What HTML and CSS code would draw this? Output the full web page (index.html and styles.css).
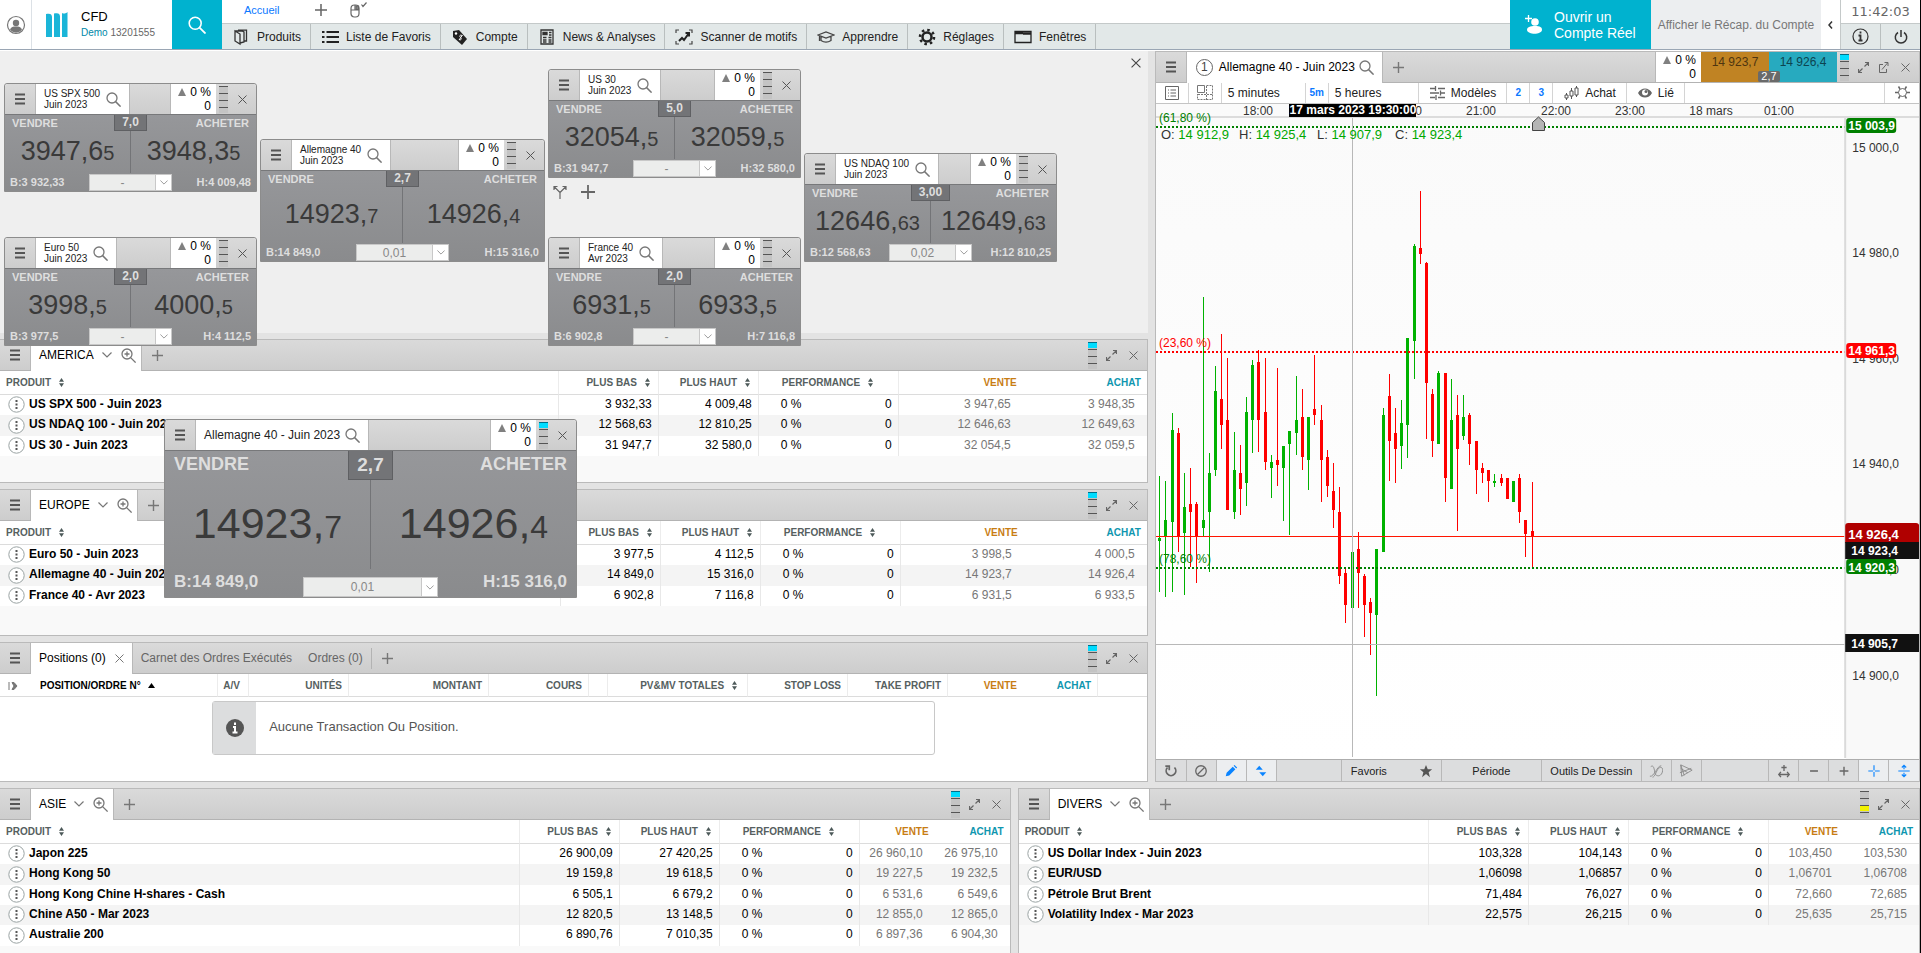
FILE: index.html
```html
<!DOCTYPE html>
<html lang="fr">
<head>
  <meta charset="UTF-8">
  <title>CFD</title>
  <link rel="stylesheet" href="styles.css">
</head>
<body>
  <!-- shared icons -->
  <svg class="sprite" width="0" height="0" aria-hidden="true">
    <symbol id="i-menu" viewBox="0 0 10 12"><path d="M0 1.500h10M0 6h10M0 10.500h10" stroke="#555" stroke-width="2"/></symbol>
    <symbol id="i-search" viewBox="0 0 15 15"><circle cx="6" cy="6" r="5" fill="none" stroke="currentColor" stroke-width="1.300"/><path d="M9.600 9.600l5 5" stroke="currentColor" stroke-width="1.500"/></symbol>
    <symbol id="i-zoom" viewBox="0 0 15 15"><circle cx="6" cy="6" r="5" fill="none" stroke="currentColor" stroke-width="1.300"/><path d="M9.600 9.600l5 5M3.500 6h5M6 3.500v5" stroke="currentColor" stroke-width="1.300"/></symbol>
    <symbol id="i-close" viewBox="0 0 9 9"><path d="M.5.5l8 8M8.500.5l-8 8" stroke="currentColor"/></symbol>
    <symbol id="i-plus" viewBox="0 0 11 11"><path d="M0 5.500h11M5.500 0v11" stroke="currentColor" stroke-width="1.400"/></symbol>
    <symbol id="i-down" viewBox="0 0 10 6"><path d="M.5.5L5 5l4.500-4.500" fill="none" stroke="currentColor" stroke-width="1.200"/></symbol>
    <symbol id="i-up" viewBox="0 0 8 8"><path d="M4 0l4 8H0z" fill="#808080"/></symbol>
    <symbol id="i-expand" viewBox="0 0 11 11"><path d="M6.500 4.500l4-4M7 .5h3.500V4M4.500 6.500l-4 4M.5 7v3.500H4" fill="none" stroke="currentColor" stroke-width="1.200"/></symbol>
    <symbol id="i-more" viewBox="0 0 17 17"><circle cx="8.500" cy="8.500" r="7.700" fill="#fff" stroke="#9aa3a3"/><path d="M7.500 4h2v2h-2zM7.500 7.500h2v2h-2zM7.500 11h2v2h-2z" fill="#555"/></symbol>
    <symbol id="i-sort" viewBox="0 0 5 9"><path d="M2.500 0L5 3.700H0zM2.500 9L5 5.300H0z" fill="#4d5a5a"/></symbol>
  </svg>

  <header class="topbar">
    <button class="user" aria-label="Profil">
      <svg width="20" height="20" viewBox="0 0 20 20"><circle cx="10" cy="10" r="8.500" fill="#fff" stroke="#777" stroke-width="1.200"/><circle cx="10" cy="8" r="3.200" fill="#777"/><path d="M4 14.500c1-2.500 3-3 6-3s5 .5 6 3a7.300 7.300 0 0 1-12 0z" fill="#777"/></svg>
    </button>
    <div class="brand">
      <svg width="22" height="26" viewBox="0 0 22 26" fill="#1bb5d8"><path d="M0 2c4-1 6 0 6 3v20H0zM8 1.500c4-1 6 0 6 3V25H8zM16 1c2 1 4 .5 5.500-1v25H16z"/></svg>
      <div class="brand-text">
        <span class="brand-name">CFD</span>
        <span class="brand-account"><b>Demo</b> 13201555</span>
      </div>
    </div>
    <button class="find" aria-label="Rechercher">
      <svg width="18" height="18"><use href="#i-search"/></svg>
    </button>
    <div class="nav">
      <div class="workspaces">
        <a href="#" class="workspace">Accueil</a>
        <button aria-label="Ajouter"><svg width="12" height="12"><use href="#i-plus"/></svg></button>
        <button aria-label="Souris">
          <svg width="17" height="16" viewBox="0 0 17 16" fill="none" stroke="#666" stroke-width="1.200"><rect x="1" y="3" width="8" height="12" rx="3.500"/><path d="M5 3v5M1 8h8M11.500 2.500l1.500 2L16.500.5"/><path d="M6 4h2.500v3.500H6z" fill="#888"/></svg>
        </button>
      </div>
      <nav class="menu">
        <a href="#"><svg viewBox="0 0 18 18" fill="none" stroke="#333" stroke-width="1.300"><path d="M3 3l5 3v10l-5-3zM3 3h7l2 1v10l-4 1M6 2.200h8.500V13H12"/></svg>Produits</a>
        <a href="#"><svg viewBox="0 0 18 18" stroke="#222" stroke-width="2"><path d="M5.500 4H18M5.500 9H18M5.500 14H18M1 4h2.500M1 9h2.500M1 14h2.500"/></svg>Liste de Favoris</a>
        <a href="#"><svg viewBox="0 0 18 18"><path d="M2 3l6-1 8 9-5 6-9-8z" fill="#222"/><circle cx="5" cy="5.500" r="1.200" fill="#fff"/><path d="M11 7.500c-2-1-3 .5-1.500 2s.5 3-1.500 2M11.500 7L8 12" stroke="#fff" fill="none"/></svg>Compte</a>
        <a href="#"><svg viewBox="0 0 18 18" fill="none" stroke="#333" stroke-width="1.300"><path d="M3 2h12v14H3z"/><path d="M5 4.500h4v2H5z" fill="#333"/><path d="M11 4.500h2.500M11 7h2.500M5 9.500h3.500M10.500 9.500h3M5 12h3.500M10.500 12h3M5 14h3.500M10.500 14h3"/></svg>News &amp; Analyses</a>
        <a href="#"><svg viewBox="0 0 18 18" fill="none" stroke="#444" stroke-width="1.200"><path d="M1 5V2h3M14 2h3v3M1 13v3h3M14 16h3v-3"/><path d="M4 13l3-3 2 2 5-7M10.500 5H14v3.500" stroke="#222" stroke-width="2"/></svg>Scanner de motifs</a>
        <a href="#"><svg viewBox="0 0 18 18" fill="none" stroke="#444" stroke-width="1.300"><path d="M1 7l8-3 8 3-8 3zM4 8.500v4c3 2 7 2 10 0v-4M2.500 8v5"/></svg>Apprendre</a>
        <a href="#"><svg viewBox="0 0 18 18" fill="none" stroke="#222"><circle cx="9" cy="9" r="4.500" stroke-width="2.500"/><circle cx="9" cy="9" r="7" stroke-width="2.600" stroke-dasharray="2.500 3"/></svg>Réglages</a>
        <a href="#"><svg viewBox="0 0 18 18" fill="none" stroke="#222"><path d="M1 3.500h16v11H1z" stroke-width="1.300"/><path d="M1 5h8M9 5.500h8" stroke-width="2.500"/></svg>Fenêtres</a>
      </nav>
    </div>
    <button class="open-account">
      <svg width="18" height="20" viewBox="0 0 18 20" fill="#fff"><circle cx="10" cy="7" r="3.800"/><path d="M2 15c0-3 3-4 8-4s7 1 7 4c-1 5-14 5-15 0z"/><path d="M0 3.500h7M3.500 0v7" stroke="#fff" stroke-width="1.300"/></svg>
      <span>Ouvrir un<br>Compte Réel</span>
    </button>
    <button class="recap">Afficher le Récap. du Compte</button>
    <button class="fold" aria-label="Replier"><svg width="5" height="8" viewBox="0 0 5 8"><path d="M4 .5L1 4l3 3.500" fill="none" stroke="#333" stroke-width="1.500"/></svg></button>
    <div class="status">
      <time class="clock">11:42:03</time>
      <div class="status-buttons">
        <button aria-label="Informations"><svg width="17" height="17" viewBox="0 0 17 17"><circle cx="8.500" cy="8.500" r="7.500" fill="none" stroke="#333" stroke-width="1.200"/><path d="M8.500 3.500v2M6.500 7.500h2v5M6.500 12.500h4" stroke="#333" stroke-width="1.800" fill="none"/></svg></button>
        <button aria-label="Déconnexion"><svg width="16" height="16" viewBox="0 0 16 16" fill="none" stroke="#333" stroke-width="1.500"><path d="M8 1v7M5 3.500a5.700 5.700 0 1 0 6 0"/></svg></button>
      </div>
    </div>
  </header>

  <main class="workspace-grid">
    <div class="upper">
      <div class="left">
        <section class="desktop">
          <button class="desktop-close" aria-label="Fermer"><svg width="10" height="10"><use href="#i-close"/></svg></button>
          <div class="desktop-tools">
            <button aria-label="Diviser"><svg width="14" height="14" viewBox="0 0 14 14" fill="none" stroke="#666" stroke-width="1.200"><path d="M7 14V7.500L1 1.500M7 7.500l6-6M1 5V1.500h3.500M9.500 1.500H13V5"/></svg></button>
            <button aria-label="Ajouter"><svg width="14" height="14"><use href="#i-plus"/></svg></button>
          </div>

          <article class="ticket t-spx">
            <header class="ticket-head">
              <button class="burger" aria-label="Menu"><svg><use href="#i-menu"/></svg></button>
              <div class="ticket-tab"><span>US SPX 500<br>Juin 2023</span><svg class="glass"><use href="#i-search"/></svg></div>
              <div class="perf"><span><svg><use href="#i-up"/></svg> 0 %</span><span>0</span></div>
              <i class="bars"></i>
              <button class="x" aria-label="Fermer"><svg><use href="#i-close"/></svg></button>
            </header>
            <div class="ticket-body">
              <div class="sides"><span>VENDRE</span><b class="spread">7,0</b><span>ACHETER</span></div>
              <div class="prices"><button>3947,6<small>5</small></button><button>3948,3<small>5</small></button></div>
              <div class="limits"><span>B:3 932,33</span><div class="qty"><input type="text" value="-" aria-label="Quantité"><button aria-label="Choisir"><svg><use href="#i-down"/></svg></button></div><span>H:4 009,48</span></div>
            </div>
          </article>

          <article class="ticket t-dax">
            <header class="ticket-head">
              <button class="burger" aria-label="Menu"><svg><use href="#i-menu"/></svg></button>
              <div class="ticket-tab"><span>Allemagne 40<br>Juin 2023</span><svg class="glass"><use href="#i-search"/></svg></div>
              <div class="perf"><span><svg><use href="#i-up"/></svg> 0 %</span><span>0</span></div>
              <i class="bars"></i>
              <button class="x" aria-label="Fermer"><svg><use href="#i-close"/></svg></button>
            </header>
            <div class="ticket-body">
              <div class="sides"><span>VENDRE</span><b class="spread">2,7</b><span>ACHETER</span></div>
              <div class="prices"><button>14923,<small>7</small></button><button>14926,<small>4</small></button></div>
              <div class="limits"><span>B:14 849,0</span><div class="qty"><input type="text" value="0,01" aria-label="Quantité"><button aria-label="Choisir"><svg><use href="#i-down"/></svg></button></div><span>H:15 316,0</span></div>
            </div>
          </article>

          <article class="ticket t-dow">
            <header class="ticket-head">
              <button class="burger" aria-label="Menu"><svg><use href="#i-menu"/></svg></button>
              <div class="ticket-tab"><span>US 30<br>Juin 2023</span><svg class="glass"><use href="#i-search"/></svg></div>
              <div class="perf"><span><svg><use href="#i-up"/></svg> 0 %</span><span>0</span></div>
              <i class="bars"></i>
              <button class="x" aria-label="Fermer"><svg><use href="#i-close"/></svg></button>
            </header>
            <div class="ticket-body">
              <div class="sides"><span>VENDRE</span><b class="spread">5,0</b><span>ACHETER</span></div>
              <div class="prices"><button>32054,<small>5</small></button><button>32059,<small>5</small></button></div>
              <div class="limits"><span>B:31 947,7</span><div class="qty"><input type="text" value="-" aria-label="Quantité"><button aria-label="Choisir"><svg><use href="#i-down"/></svg></button></div><span>H:32 580,0</span></div>
            </div>
          </article>

          <article class="ticket t-ndaq">
            <header class="ticket-head">
              <button class="burger" aria-label="Menu"><svg><use href="#i-menu"/></svg></button>
              <div class="ticket-tab"><span>US NDAQ 100<br>Juin 2023</span><svg class="glass"><use href="#i-search"/></svg></div>
              <div class="perf"><span><svg><use href="#i-up"/></svg> 0 %</span><span>0</span></div>
              <i class="bars"></i>
              <button class="x" aria-label="Fermer"><svg><use href="#i-close"/></svg></button>
            </header>
            <div class="ticket-body">
              <div class="sides"><span>VENDRE</span><b class="spread">3,00</b><span>ACHETER</span></div>
              <div class="prices"><button>12646,<small>63</small></button><button>12649,<small>63</small></button></div>
              <div class="limits"><span>B:12 568,63</span><div class="qty"><input type="text" value="0,02" aria-label="Quantité"><button aria-label="Choisir"><svg><use href="#i-down"/></svg></button></div><span>H:12 810,25</span></div>
            </div>
          </article>

          <article class="ticket t-euro">
            <header class="ticket-head">
              <button class="burger" aria-label="Menu"><svg><use href="#i-menu"/></svg></button>
              <div class="ticket-tab"><span>Euro 50<br>Juin 2023</span><svg class="glass"><use href="#i-search"/></svg></div>
              <div class="perf"><span><svg><use href="#i-up"/></svg> 0 %</span><span>0</span></div>
              <i class="bars"></i>
              <button class="x" aria-label="Fermer"><svg><use href="#i-close"/></svg></button>
            </header>
            <div class="ticket-body">
              <div class="sides"><span>VENDRE</span><b class="spread">2,0</b><span>ACHETER</span></div>
              <div class="prices"><button>3998,<small>5</small></button><button>4000,<small>5</small></button></div>
              <div class="limits"><span>B:3 977,5</span><div class="qty"><input type="text" value="-" aria-label="Quantité"><button aria-label="Choisir"><svg><use href="#i-down"/></svg></button></div><span>H:4 112,5</span></div>
            </div>
          </article>

          <article class="ticket t-cac">
            <header class="ticket-head">
              <button class="burger" aria-label="Menu"><svg><use href="#i-menu"/></svg></button>
              <div class="ticket-tab"><span>France 40<br>Avr 2023</span><svg class="glass"><use href="#i-search"/></svg></div>
              <div class="perf"><span><svg><use href="#i-up"/></svg> 0 %</span><span>0</span></div>
              <i class="bars"></i>
              <button class="x" aria-label="Fermer"><svg><use href="#i-close"/></svg></button>
            </header>
            <div class="ticket-body">
              <div class="sides"><span>VENDRE</span><b class="spread">2,0</b><span>ACHETER</span></div>
              <div class="prices"><button>6931,<small>5</small></button><button>6933,<small>5</small></button></div>
              <div class="limits"><span>B:6 902,8</span><div class="qty"><input type="text" value="-" aria-label="Quantité"><button aria-label="Choisir"><svg><use href="#i-down"/></svg></button></div><span>H:7 116,8</span></div>
            </div>
          </article>

          <article class="ticket big t-float">
            <header class="ticket-head">
              <button class="burger" aria-label="Menu"><svg><use href="#i-menu"/></svg></button>
              <div class="ticket-tab"><span>Allemagne 40 - Juin 2023</span><svg class="glass"><use href="#i-search"/></svg></div>
              <div class="perf"><span><svg><use href="#i-up"/></svg> 0 %</span><span>0</span></div>
              <i class="bars live"></i>
              <button class="x" aria-label="Fermer"><svg><use href="#i-close"/></svg></button>
            </header>
            <div class="ticket-body">
              <div class="sides"><span>VENDRE</span><b class="spread">2,7</b><span>ACHETER</span></div>
              <div class="prices"><button>14923,<small>7</small></button><button>14926,<small>4</small></button></div>
              <div class="limits"><span>B:14 849,0</span><div class="qty"><input type="text" value="0,01" aria-label="Quantité"><button aria-label="Choisir"><svg><use href="#i-down"/></svg></button></div><span>H:15 316,0</span></div>
            </div>
          </article>
        </section>

        <section class="panel">
          <header class="strip">
            <button class="burger" aria-label="Menu"><svg><use href="#i-menu"/></svg></button>
            <div class="tab">AMERICA <svg class="chev"><use href="#i-down"/></svg><svg class="glass"><use href="#i-zoom"/></svg></div>
            <button class="add" aria-label="Ajouter"><svg><use href="#i-plus"/></svg></button>
            <i class="bars live"></i>
            <button class="grow" aria-label="Agrandir"><svg><use href="#i-expand"/></svg></button>
            <button class="x" aria-label="Fermer"><svg><use href="#i-close"/></svg></button>
          </header>
          <table class="quotes wide">
            <colgroup><col><col class="c-num"><col class="c-num"><col class="c-perf"><col class="c-price"><col class="c-price"></colgroup>
            <thead><tr><th>PRODUIT <svg><use href="#i-sort"/></svg></th><th>PLUS BAS <svg><use href="#i-sort"/></svg></th><th>PLUS HAUT <svg><use href="#i-sort"/></svg></th><th>PERFORMANCE <svg><use href="#i-sort"/></svg></th><th class="sell">VENTE</th><th class="buy">ACHAT</th></tr></thead>
            <tbody>
              <tr><td><button aria-label="Options"><svg><use href="#i-more"/></svg></button>US SPX 500 - Juin 2023</td><td>3 932,33</td><td>4 009,48</td><td><span>0 %</span><span>0</span></td><td>3 947,65</td><td>3 948,35</td></tr>
              <tr><td><button aria-label="Options"><svg><use href="#i-more"/></svg></button>US NDAQ 100 - Juin 2023</td><td>12 568,63</td><td>12 810,25</td><td><span>0 %</span><span>0</span></td><td>12 646,63</td><td>12 649,63</td></tr>
              <tr><td><button aria-label="Options"><svg><use href="#i-more"/></svg></button>US 30 - Juin 2023</td><td>31 947,7</td><td>32 580,0</td><td><span>0 %</span><span>0</span></td><td>32 054,5</td><td>32 059,5</td></tr>
            </tbody>
          </table>
        </section>

        <section class="panel">
          <header class="strip">
            <button class="burger" aria-label="Menu"><svg><use href="#i-menu"/></svg></button>
            <div class="tab">EUROPE <svg class="chev"><use href="#i-down"/></svg><svg class="glass"><use href="#i-zoom"/></svg></div>
            <button class="add" aria-label="Ajouter"><svg><use href="#i-plus"/></svg></button>
            <i class="bars live"></i>
            <button class="grow" aria-label="Agrandir"><svg><use href="#i-expand"/></svg></button>
            <button class="x" aria-label="Fermer"><svg><use href="#i-close"/></svg></button>
          </header>
          <table class="quotes europe">
            <colgroup><col><col class="c-num"><col class="c-num"><col class="c-perf"><col class="c-price"><col class="c-price"></colgroup>
            <thead><tr><th>PRODUIT <svg><use href="#i-sort"/></svg></th><th>PLUS BAS <svg><use href="#i-sort"/></svg></th><th>PLUS HAUT <svg><use href="#i-sort"/></svg></th><th>PERFORMANCE <svg><use href="#i-sort"/></svg></th><th class="sell">VENTE</th><th class="buy">ACHAT</th></tr></thead>
            <tbody>
              <tr><td><button aria-label="Options"><svg><use href="#i-more"/></svg></button>Euro 50 - Juin 2023</td><td>3 977,5</td><td>4 112,5</td><td><span>0 %</span><span>0</span></td><td>3 998,5</td><td>4 000,5</td></tr>
              <tr><td><button aria-label="Options"><svg><use href="#i-more"/></svg></button>Allemagne 40 - Juin 2023</td><td>14 849,0</td><td>15 316,0</td><td><span>0 %</span><span>0</span></td><td>14 923,7</td><td>14 926,4</td></tr>
              <tr><td><button aria-label="Options"><svg><use href="#i-more"/></svg></button>France 40 - Avr 2023</td><td>6 902,8</td><td>7 116,8</td><td><span>0 %</span><span>0</span></td><td>6 931,5</td><td>6 933,5</td></tr>
            </tbody>
          </table>
        </section>

        <section class="panel positions">
          <header class="strip">
            <button class="burger" aria-label="Menu"><svg><use href="#i-menu"/></svg></button>
            <div class="tab">Positions (0) <svg class="tab-x"><use href="#i-close"/></svg></div>
            <button class="other">Carnet des Ordres Exécutés</button>
            <button class="other last">Ordres (0)</button>
            <button class="add" aria-label="Ajouter"><svg><use href="#i-plus"/></svg></button>
            <i class="bars live"></i>
            <button class="grow" aria-label="Agrandir"><svg><use href="#i-expand"/></svg></button>
            <button class="x" aria-label="Fermer"><svg><use href="#i-close"/></svg></button>
          </header>
          <table class="orders">
            <colgroup><col class="o-icon"><col class="o-id"><col class="o-side"><col class="c-num"><col class="c-perf"><col class="c-num"><col class="o-gap"><col class="c-perf"><col class="c-num"><col class="c-num"><col class="o-price"><col class="o-price"><col></colgroup>
            <thead><tr>
              <th><svg class="step" viewBox="0 0 10 8"><path d="M1 0v8M4 .5h2L9 4 6 7.500H4L6 4z" fill="#777" stroke="#777"/></svg></th>
              <th class="sorted">POSITION/ORDRE N° <svg class="asc" viewBox="0 0 7 5"><path d="M3.500 0L7 5H0z"/></svg></th>
              <th>A/V</th><th>UNITÉS</th><th>MONTANT</th><th>COURS</th><th></th>
              <th>PV&amp;MV TOTALES <svg><use href="#i-sort"/></svg></th><th>STOP LOSS</th><th>TAKE PROFIT</th>
              <th class="sell">VENTE</th><th class="buy">ACHAT</th><th></th>
            </tr></thead>
          </table>
          <div class="notice">
            <div class="notice-icon"><svg width="18" height="18" viewBox="0 0 18 18"><circle cx="9" cy="9" r="9" fill="#555"/><path d="M9 3.500V6M7 8h2v5.500M6.500 13.500h5" stroke="#fff" stroke-width="2" fill="none"/></svg></div>
            <p>Aucune Transaction Ou Position.</p>
          </div>
        </section>
      </div>

      <section class="panel chart">
        <header class="strip">
          <button class="burger" aria-label="Menu"><svg><use href="#i-menu"/></svg></button>
          <div class="tab"><span class="num">1</span>Allemagne 40 - Juin 2023<svg class="glass"><use href="#i-search"/></svg></div>
          <button class="add" aria-label="Ajouter"><svg><use href="#i-plus"/></svg></button>
          <div class="perf"><span><svg><use href="#i-up"/></svg> 0 %</span><span>0</span></div>
          <div class="deal"><button class="deal-sell">14 923,7</button><button class="deal-buy">14 926,4</button><span class="deal-spread">2,7</span></div>
          <i class="bars live"></i>
          <button class="grow" aria-label="Agrandir"><svg><use href="#i-expand"/></svg></button>
          <button class="grow" aria-label="Détacher"><svg viewBox="0 0 11 11" fill="none" stroke="currentColor"><path d="M5 2.500H1.500v8h7V7M4 7.500L9.500 1M6.500.5H10V4"/></svg></button>
          <button class="x" aria-label="Fermer"><svg><use href="#i-close"/></svg></button>
        </header>
        <div class="tools">
          <button class="t-icon" aria-label="Liste"><svg width="14" height="14" viewBox="0 0 14 14" fill="none" stroke="#666"><path d="M.5.5h13v13H.5zM3 4h1M5.500 4H11M3 7h1M5.500 7H11M3 10h1M5.500 10H11"/></svg></button>
          <button class="t-icon" aria-label="Grille"><svg width="16" height="15" viewBox="0 0 16 15" fill="none" stroke="#777"><path d="M.5.500h7v7h-7z"/><path d="M9.500.5h6v14h-15V9M9.500 1v14M1 9.500h15" stroke-dasharray="2 1"/></svg></button>
          <button class="t-range">5 minutes</button>
          <button class="t-key">5m</button>
          <button class="t-hours">5 heures</button>
          <button class="t-text"><svg width="15" height="14" viewBox="0 0 15 14" stroke="#666" stroke-width="1.300"><path d="M0 2.500h6M8 2.500h7M0 7h9M11 7h4M0 11.500h5M8 11.500h7M5.500 0v5M10.500 4.500v5M6 9v5"/></svg>Modèles</button>
          <button class="t-key">2</button>
          <button class="t-key">3</button>
          <button class="t-text"><svg width="15" height="14" viewBox="0 0 15 14" fill="none" stroke="#555"><path d="M2.500 7v2M2.500 12v2M7.500 2v3M7.500 10v3M12.500 0v2M12.500 9v2M1 9h3v3H1zM6 5h3v5H6zM11 2h3v7h-3z"/></svg>Achat</button>
          <button class="t-text"><svg width="14" height="14" viewBox="0 0 14 14"><path d="M0 7c3-6 11-6 14 0-3 6-11 6-14 0z" fill="#666"/><circle cx="7" cy="6.500" r="3" fill="#fff"/><circle cx="8" cy="5.500" r="1.500" fill="#666"/></svg>Lié</button>
          <button class="t-icon t-gear" aria-label="Réglages"><svg width="15" height="15" viewBox="0 0 15 15" fill="none" stroke="#666"><circle cx="7.500" cy="7.500" r="4"/><path d="M5 4L3.500 1.500M10 4l1.500-2.500M3.500 7.500H0M11.500 7.500H15M5 11l-1.500 2.500M10 11l1.500 2.500" stroke-width="1.500"/></svg></button>
        </div>
        <svg class="plot" width="100%" role="img" aria-label="Allemagne 40">
          <defs>
            <linearGradient id="bg" x1="0" y1="0" x2="0" y2="1"><stop offset="0" stop-color="#fafafa"/><stop offset="1" stop-color="#fff"/></linearGradient>
          </defs>
          <rect width="100%" height="100%" fill="url(#bg)"/>
          <rect y="12" width="100%" height="2" fill="#dcdcdc"/>
          <g text-anchor="middle">
            <text x="102" y="11">18:00</text>
            <text x="251" y="11">20:00</text>
            <text x="325" y="11">21:00</text>
            <text x="400" y="11">22:00</text>
            <text x="474" y="11">23:00</text>
            <text x="555" y="11">18 mars</text>
            <text x="623" y="11">01:00</text>
          </g>
          <rect x="133" y="0" width="127" height="13"/>
          <text x="197" y="10" class="cursor-time">17 mars 2023 19:30:00</text>
          <g id="candles" transform="translate(0 14)"></g>
          <g class="levels">
            <line x2="100%" y1="23" y2="23" stroke="#008000"/>
            <line x2="100%" y1="248" y2="248" stroke="#f00"/>
            <line x2="100%" y1="464" y2="464" stroke="#008000"/>
          </g>
          <line x2="100%" y1="432.500" y2="432.500" stroke="#ff1500"/>
          <line x2="100%" y1="540.500" y2="540.500" stroke="#b8b8b8"/>
          <line x1="196.500" x2="196.500" y1="14" y2="653" stroke="#b8b8b8"/>
          <text x="3" y="18" class="up">(61,80 %)</text>
          <text x="3" y="243" class="down">(23,60 %)</text>
          <text x="3" y="459" class="up">(78,60 %)</text>
          <g class="ohlc">
            <text x="5" y="35">O: <tspan>14 912,9</tspan></text>
            <text x="83" y="35">H: <tspan>14 925,4</tspan></text>
            <text x="161" y="35">L: <tspan>14 907,9</tspan></text>
            <text x="239" y="35">C: <tspan>14 923,4</tspan></text>
          </g>
          <path d="M376.500 26.500v-8l6-5.500 6 5.500v8z" fill="#b5b5b5" stroke="#444"/>
          <!-- price scale, measured from the right edge -->
          <svg x="100%" overflow="visible">
            <rect x="-73" y="14" width="73" height="700" fill="#f9f9f9"/>
            <rect x="-75" y="14" width="2" height="640" fill="#dadada"/>
            <text x="-67" y="48">15 000,0</text>
            <text x="-67" y="153">14 980,0</text>
            <text x="-67" y="259">14 960,0</text>
            <text x="-67" y="364">14 940,0</text>
            <text x="-67" y="470">14 920,0</text>
            <text x="-67" y="576">14 900,0</text>
            <rect x="-73" y="14" width="50" height="15" rx="3" fill="#008000"/>
            <text x="-71" y="26" class="tag">15 003,9</text>
            <rect x="-73" y="239" width="50" height="15" rx="3" fill="#f00"/>
            <text x="-71" y="251" class="tag">14 961,3</text>
            <path d="M-74 439v-17q0-3 3-3h68q3 0 3 3v17z" fill="#b00000"/>
            <text x="-71" y="435" class="tag current">14 926,4</text>
            <rect x="-74" y="438" width="74" height="17" fill="#111"/>
            <text x="-68" y="451" class="tag">14 923,4</text>
            <rect x="-73" y="455" width="50" height="15" rx="3" fill="#008000"/>
            <text x="-71" y="468" class="tag">14 920,3</text>
            <rect x="-74" y="530" width="74" height="18" fill="#111"/>
            <text x="-68" y="544" class="tag">14 905,7</text>
          </svg>
        </svg>
        <footer class="drawbar">
          <button class="d-icon" aria-label="Actualiser"><svg viewBox="0 0 16 16" fill="none" stroke="#666" stroke-width="2"><path d="M4 4a5.500 5.500 0 1 0 8 0M1.500 2.500h4.500V7"/></svg></button>
          <button class="d-icon" aria-label="Effacer"><svg viewBox="0 0 16 16" fill="none" stroke="#666" stroke-width="1.500"><circle cx="8" cy="8" r="6"/><path d="M4 12l8-8"/></svg></button>
          <button class="d-icon on" aria-label="Dessiner"><svg viewBox="0 0 16 16" fill="#0a84ff"><path d="M2 14l1-4 7-7 3 3-7 7zM11 2l1-1 3 3-1 1z"/></svg></button>
          <button class="d-icon on" aria-label="Niveaux"><svg viewBox="0 0 16 16" fill="#0a84ff"><path d="M6 2l4 4.500H2zM10 14l4-4.500H6z"/></svg></button>
          <span class="d-gap"></span>
          <button class="d-fav">Favoris<svg viewBox="0 0 16 16" fill="#555"><path d="M8 1l2 5h5l-4 3.500 1.500 5.500L8 11.500 3.500 15 5 9.500 1 6h5z"/></svg></button>
          <button class="d-period">Période</button>
          <button class="d-draw">Outils De Dessin</button>
          <button class="d-icon" aria-label="Indicateurs"><svg viewBox="0 0 16 16" fill="none" stroke="#888"><path d="M1 14c5 1 8-12 13-12M2 3c4-3 4 5 5 8s6 4 8-1-1-8-4-5-4 10-7 10"/></svg></button>
          <button class="d-icon" aria-label="Motifs"><svg viewBox="0 0 16 16" fill="none" stroke="#888"><path d="M2 1l13 6L3 14zM2 1l4 12M1 10L14 5M2 5l8 5"/></svg></button>
          <span class="d-rest"></span>
          <button class="d-icon" aria-label="Ajuster"><svg viewBox="0 0 16 16" fill="none" stroke="#666" stroke-width="1.500"><path d="M8 1v7M5 4h6M2 12h12M4.500 9L2 12l2.500 3M11.500 9l2.500 3-2.500 3"/></svg></button>
          <button class="d-icon" aria-label="Réduire"><svg viewBox="0 0 16 16" stroke="#666" stroke-width="1.800"><path d="M3.500 8h9"/></svg></button>
          <button class="d-icon" aria-label="Agrandir"><svg viewBox="0 0 16 16" stroke="#666" stroke-width="1.600"><path d="M3 8h10M8 3v10"/></svg></button>
          <button class="d-icon on" aria-label="Réticule"><svg viewBox="0 0 16 16" stroke="#0a84ff" stroke-width="1.300"><path d="M1.500 8H7M9 8h5.500M8 1.500V7M8 9v5.500"/></svg></button>
          <button class="d-icon on" aria-label="Échelle"><svg viewBox="0 0 16 16" fill="none" stroke="#0a84ff" stroke-width="1.300"><path d="M1.500 8h13M8 6V1.500M5.500 4L8 1.500 10.500 4M8 10v4.500M5.500 12L8 14.500l2.500-2.500"/></svg></button>
        </footer>
      </section>
    </div>

    <div class="lower">
      <section class="panel">
        <header class="strip">
          <button class="burger" aria-label="Menu"><svg><use href="#i-menu"/></svg></button>
          <div class="tab">ASIE <svg class="chev"><use href="#i-down"/></svg><svg class="glass"><use href="#i-zoom"/></svg></div>
          <button class="add" aria-label="Ajouter"><svg><use href="#i-plus"/></svg></button>
          <i class="bars live"></i>
          <button class="grow" aria-label="Agrandir"><svg><use href="#i-expand"/></svg></button>
          <button class="x" aria-label="Fermer"><svg><use href="#i-close"/></svg></button>
        </header>
        <table class="quotes">
          <colgroup><col><col class="c-num"><col class="c-num"><col class="c-perf"><col class="c-price"><col class="c-price"></colgroup>
          <thead><tr><th>PRODUIT <svg><use href="#i-sort"/></svg></th><th>PLUS BAS <svg><use href="#i-sort"/></svg></th><th>PLUS HAUT <svg><use href="#i-sort"/></svg></th><th>PERFORMANCE <svg><use href="#i-sort"/></svg></th><th class="sell">VENTE</th><th class="buy">ACHAT</th></tr></thead>
          <tbody>
            <tr><td><button aria-label="Options"><svg><use href="#i-more"/></svg></button>Japon 225</td><td>26 900,09</td><td>27 420,25</td><td><span>0 %</span><span>0</span></td><td>26 960,10</td><td>26 975,10</td></tr>
            <tr><td><button aria-label="Options"><svg><use href="#i-more"/></svg></button>Hong Kong 50</td><td>19 159,8</td><td>19 618,5</td><td><span>0 %</span><span>0</span></td><td>19 227,5</td><td>19 232,5</td></tr>
            <tr><td><button aria-label="Options"><svg><use href="#i-more"/></svg></button>Hong Kong Chine H-shares - Cash</td><td>6 505,1</td><td>6 679,2</td><td><span>0 %</span><span>0</span></td><td>6 531,6</td><td>6 549,6</td></tr>
            <tr><td><button aria-label="Options"><svg><use href="#i-more"/></svg></button>Chine A50 - Mar 2023</td><td>12 820,5</td><td>13 148,5</td><td><span>0 %</span><span>0</span></td><td>12 855,0</td><td>12 865,0</td></tr>
            <tr><td><button aria-label="Options"><svg><use href="#i-more"/></svg></button>Australie 200</td><td>6 890,76</td><td>7 010,35</td><td><span>0 %</span><span>0</span></td><td>6 897,36</td><td>6 904,30</td></tr>
          </tbody>
        </table>
      </section>

      <section class="panel">
        <header class="strip">
          <button class="burger" aria-label="Menu"><svg><use href="#i-menu"/></svg></button>
          <div class="tab">DIVERS <svg class="chev"><use href="#i-down"/></svg><svg class="glass"><use href="#i-zoom"/></svg></div>
          <button class="add" aria-label="Ajouter"><svg><use href="#i-plus"/></svg></button>
          <i class="bars warn"></i>
          <button class="grow" aria-label="Agrandir"><svg><use href="#i-expand"/></svg></button>
          <button class="x" aria-label="Fermer"><svg><use href="#i-close"/></svg></button>
        </header>
        <table class="quotes">
          <colgroup><col><col class="c-num"><col class="c-num"><col class="c-perf"><col class="c-price"><col class="c-price"></colgroup>
          <thead><tr><th>PRODUIT <svg><use href="#i-sort"/></svg></th><th>PLUS BAS <svg><use href="#i-sort"/></svg></th><th>PLUS HAUT <svg><use href="#i-sort"/></svg></th><th>PERFORMANCE <svg><use href="#i-sort"/></svg></th><th class="sell">VENTE</th><th class="buy">ACHAT</th></tr></thead>
          <tbody>
            <tr><td><button aria-label="Options"><svg><use href="#i-more"/></svg></button>US Dollar Index - Juin 2023</td><td>103,328</td><td>104,143</td><td><span>0 %</span><span>0</span></td><td>103,450</td><td>103,530</td></tr>
            <tr><td><button aria-label="Options"><svg><use href="#i-more"/></svg></button>EUR/USD</td><td>1,06098</td><td>1,06857</td><td><span>0 %</span><span>0</span></td><td>1,06701</td><td>1,06708</td></tr>
            <tr><td><button aria-label="Options"><svg><use href="#i-more"/></svg></button>Pétrole Brut Brent</td><td>71,484</td><td>76,027</td><td><span>0 %</span><span>0</span></td><td>72,660</td><td>72,685</td></tr>
            <tr><td><button aria-label="Options"><svg><use href="#i-more"/></svg></button>Volatility Index - Mar 2023</td><td>22,575</td><td>26,215</td><td><span>0 %</span><span>0</span></td><td>25,635</td><td>25,715</td></tr>
          </tbody>
        </table>
      </section>
    </div>
  </main>
  <script src="script.js"></script>
</body>
</html>
```
FILE: styles.css
```css
* {
  box-sizing: border-box;
}
body {
  margin: 0;
  height: 100vh;
  display: flex;
  flex-direction: column;
  overflow: hidden;
  border-right: 1px solid #000;
  background: #fff;
  color: #222;
  font: 12px "Liberation Sans", Arial, sans-serif;
}
button {
  margin: 0;
  padding: 0;
  border: 0;
  background: none;
  color: inherit;
  font: inherit;
}
a {
  color: inherit;
  text-decoration: none;
}
svg {
  flex: none;
  display: block;
}
.sprite {
  position: absolute;
}

/* top bar */
.topbar {
  display: flex;
  flex: none;
  height: 50px;
  margin-bottom: 1px;
  border-bottom: 1px solid #9aa6b4;
}
.user {
  width: 32px;
  padding: 0 6px;
  border-right: 1px solid #dce1e6;
}
.brand {
  display: flex;
  align-items: center;
  gap: 13px;
  width: 140px;
  padding-left: 14px;
}
.brand-text {
  display: flex;
  flex-direction: column;
  gap: 1px;
}
.brand-name {
  color: #000;
  font-size: 13px;
  line-height: 15px;
}
.brand-account {
  color: #666;
  font-size: 10px;
  line-height: 15px;
}
.brand-account b {
  color: #0088a8;
  font-weight: normal;
}
.find {
  display: flex;
  align-items: center;
  justify-content: center;
  width: 50px;
  background: #00b2cf;
  color: #fff;
}
.nav {
  flex: 1;
  display: flex;
  flex-direction: column;
}
.workspaces {
  display: flex;
  align-items: center;
  gap: 23px;
  height: 23px;
  padding: 0 22px 3px;
  color: #666;
}
.workspaces button:first-of-type {
  margin-left: 13px;
}
.workspace {
  color: #0a78ff;
  font-size: 11px;
}
.menu {
  display: flex;
  flex: 1;
  border-top: 1px solid #c4c9c9;
  background: #e2e8e8;
}
.menu a {
  display: flex;
  align-items: center;
  gap: 7px;
  padding: 0 9px 0 10px;
  border-right: 1px solid #b9bfbf;
}
.menu svg {
  width: 18px;
  height: 18px;
}
.open-account {
  display: flex;
  align-items: center;
  gap: 11px;
  width: 141px;
  padding-left: 15px;
  background: #00b2cf;
  color: #fff;
  font-size: 14px;
  line-height: 16px;
  text-align: left;
}
.recap {
  width: 170px;
  background: #eceef0;
  color: #777;
}
.recap,
.tab,
.other,
.menu a {
  white-space: nowrap;
}
.fold {
  display: flex;
  align-items: center;
  justify-content: center;
  width: 19px;
}
.status {
  display: flex;
  flex-direction: column;
  width: 80px;
  border-left: 1px solid #c4c9c9;
}
.clock {
  height: 23px;
  color: #666;
  font: 13px/23px "DejaVu Sans", sans-serif;
  text-align: center;
}
.status-buttons {
  display: flex;
  flex: 1;
  border-top: 1px solid #c4c9c9;
  background: #e2e8e8;
}
.status-buttons button {
  display: flex;
  flex: 1;
  align-items: center;
  justify-content: center;
}
.status-buttons button + button {
  border-left: 1px solid #b9bfbf;
}

/* layout */
.workspace-grid {
  flex: 1;
  display: grid;
  grid-template-rows: minmax(0, 1fr) 165px;
  gap: 6px;
  background: #e3e3e3;
}
.upper {
  display: grid;
  grid-template-columns: 3fr 2fr;
  gap: 7px;
  min-height: 0;
}
.lower {
  display: grid;
  grid-template-columns: 28fr 25fr;
  gap: 7px;
}
.left {
  display: grid;
  grid-template-rows: 282px 144px 1fr 140px;
  row-gap: 6px;
  min-width: 0;
}

/* panels */
.panel {
  display: flex;
  flex-direction: column;
  min-width: 0;
  border: 1px solid #bababa;
  border-left-width: 0;
  background: #f9f9f9;
}
.chart,
.lower .panel + .panel {
  border-left-width: 1px;
}
.lower .panel {
  border-bottom: 0;
}
.strip {
  display: flex;
  flex: none;
  align-items: center;
  height: 31px;
  border-bottom: 1px solid #b3b3b3;
  background: linear-gradient(#dadada, #cdcdcd);
  color: #666;
}
.burger {
  display: flex;
  flex: none;
  align-items: center;
  justify-content: center;
  align-self: stretch;
  width: 31px;
  border-right: 1px solid #b8b8b8;
}
.burger svg {
  width: 10px;
  height: 12px;
}
.tab {
  display: flex;
  align-items: center;
  height: 31px;
  padding: 0 5px 0 8px;
  border-right: 1px solid #b8b8b8;
  background: #fff;
  color: #000;
}
.glass {
  width: 15px;
  height: 15px;
  color: #777;
}
.chev {
  width: 10px;
  height: 6px;
  margin: 0 9px 0 8px;
  color: #777;
}
.tab-x {
  width: 9px;
  height: 9px;
  margin: 0 3px 0 9px;
  color: #777;
}
.other {
  padding: 0 8px;
}
.last {
  height: 21px;
  border-right: 1px solid #b3b3b3;
}
.add {
  margin: 0 auto 0 10px;
  color: #777;
}
.add svg,
.grow svg {
  width: 11px;
  height: 11px;
}
.strip .grow {
  margin-left: 9px;
}
.x svg {
  width: 9px;
  height: 9px;
}
.strip .x {
  margin: 0 9px 0 12px;
}
.bars {
  flex: none;
  width: 9px;
  height: 27px;
  background: repeating-linear-gradient(#555 0 1px, #c4c4c4 1px 7px);
}
.bars.live {
  background: linear-gradient(#00708a 0 1px, #00dcff 1px 6px, transparent 6px), repeating-linear-gradient(#555 0 1px, #c4c4c4 1px 7px);
}
.bars.warn {
  background: linear-gradient(transparent 15px, #f2f200 15px 20px, transparent 20px), repeating-linear-gradient(#555 0 1px, #c4c4c4 1px 7px);
}
.perf {
  display: flex;
  flex: none;
  flex-direction: column;
  align-items: flex-end;
  justify-content: center;
  align-self: stretch;
  width: 46px;
  padding-right: 5px;
  border-left: 1px solid #b8b8b8;
  background: #fff;
  color: #000;
  line-height: 14px;
}
.perf span {
  display: flex;
  align-items: center;
  gap: 4px;
}
.perf svg {
  width: 8px;
  height: 8px;
}

/* tables */
table {
  width: 100%;
  border-collapse: separate;
  border-spacing: 0;
  table-layout: fixed;
}
.c-num {
  width: 100px;
}
.c-perf {
  width: 140px;
}
.c-price {
  width: 75px;
}
.wide .c-price {
  width: 124px;
}
.europe .c-price {
  width: 123px;
}
th {
  height: 24px;
  padding: 0 8px 0 0;
  border-right: 1px solid #ececec;
  border-bottom: 1px solid #dcdcdc;
  background: #fff;
  color: #566060;
  font-size: 10px;
  line-height: 12px;
  text-align: right;
  white-space: nowrap;
}
th svg {
  display: inline-block;
  width: 5px;
  height: 9px;
  margin-left: 5px;
  vertical-align: -1px;
}
.quotes th:first-child {
  padding-left: 6px;
  text-align: left;
}
.quotes th:nth-child(4) {
  padding-left: 23px;
  text-align: left;
}
.quotes .sell,
.quotes .buy,
.orders .sell,
.orders .buy {
  padding-right: 6px;
  border-right: 0;
}
th.sell {
  color: #c87d14;
}
th.buy {
  color: #0f96af;
}
td {
  height: 20px;
  padding: 0 6px 2px 0;
  border-right: 1px solid #e8e8e8;
  background: #fff;
  color: #000;
  line-height: 18px;
  text-align: right;
  white-space: nowrap;
}
tr:nth-child(even) td {
  background: #f4f4f4;
}
td:first-child {
  padding-left: 8px;
  font-weight: bold;
  text-align: left;
}
td button {
  display: inline-block;
  height: 17px;
  margin-right: 4px;
  vertical-align: middle;
}
td button svg {
  width: 17px;
  height: 17px;
}
td:nth-child(4) span:first-child {
  float: left;
  margin-left: 22px;
}
td:nth-child(n + 5) {
  padding-right: 12px;
  border-right: 0;
  color: #777;
}
.positions {
  background: #fff;
}
.orders th {
  height: 23px;
  padding: 1px 6px 0 0;
}
.orders th:nth-child(8) {
  padding-right: 10px;
}
.orders th:first-child {
  border-right: 0;
}
.orders th:first-child svg {
  display: block;
  width: 10px;
  height: 8px;
  margin: 0 0 0 8px;
}
.orders .sorted {
  padding-left: 12px;
  color: #000;
  text-align: left;
}
.orders .asc {
  width: 7px;
  height: 5px;
  vertical-align: 1px;
}
.orders th:nth-child(12) {
  border-right: 1px solid #ececec;
}
.orders th:last-child {
  border-right: 0;
}
.o-icon {
  width: 28px;
}
.o-id {
  width: 190px;
}
.o-side {
  width: 31px;
}
.o-gap {
  width: 19px;
}
.o-price {
  width: 75px;
}
.orders th:nth-child(3) {
  padding-right: 8px;
}
.notice {
  display: flex;
  align-self: center;
  width: 63%;
  height: 54px;
  margin-top: 4px;
  border: 1px solid #c8c8c8;
  border-radius: 3px;
  color: #555;
  font-size: 13px;
}
.notice-icon {
  display: flex;
  align-items: center;
  justify-content: center;
  width: 43px;
  background: #dcddde;
}
.notice p {
  margin: 0 13px;
  line-height: 50px;
}

/* order tickets floating over the desktop */
.desktop {
  position: relative;
  z-index: 2;
  background: #efefef;
}
.desktop-close {
  position: absolute;
  top: 7px;
  right: 7px;
  color: #444;
}
.desktop-tools {
  position: absolute;
  top: 134px;
  left: 553px;
  display: flex;
  gap: 14px;
  color: #666;
}
.ticket {
  position: absolute;
  display: flex;
  flex-direction: column;
  width: 253px;
  height: 109px;
  border: 1px solid #8c8c8c;
  border-radius: 3px 3px 0 0;
}
.t-spx { left: 4px; top: 32px; }
.t-dax { left: 260px; top: 88px; width: 285px; height: 123px; }
.t-dow { left: 548px; top: 18px; }
.t-ndaq { left: 804px; top: 102px; }
.t-euro { left: 4px; top: 186px; }
.t-cac { left: 548px; top: 186px; }
.t-float { left: 164px; top: 368px; width: 413px; height: 179px; }
.ticket-head {
  display: flex;
  flex: none;
  align-items: center;
  height: 31px;
  border-bottom: 1px solid #77787a;
  border-radius: 3px 3px 0 0;
  background: linear-gradient(#dadada, #cdcdcd);
  color: #555;
}
.ticket-tab {
  display: flex;
  align-items: center;
  align-self: stretch;
  gap: 6px;
  margin-right: auto;
  padding: 0 8px;
  border-right: 1px solid #b8b8b8;
  background: #fff;
  color: #222;
  font-size: 10px;
  line-height: 11px;
}
.big .ticket-tab {
  gap: 5px;
  font-size: 12px;
}
.ticket .bars {
  margin: 0 10px 0 3px;
}
.ticket .x {
  margin-right: 9px;
}
.ticket-body {
  display: flex;
  flex: 1;
  flex-direction: column;
  background: linear-gradient(#96979a, #8a8b8d);
  color: #dedede;
}
.sides,
.limits {
  display: grid;
  grid-template-columns: 1fr auto 1fr;
  font-size: 11px;
  font-weight: bold;
}
.sides {
  height: 16px;
  padding: 0 7px;
  line-height: 17px;
}
.sides span:last-child,
.limits > span:last-child {
  text-align: right;
}
.spread {
  height: 16px;
  padding: 0 7px;
  border: 1px solid #5f6063;
  border-top: 0;
  background: #737477;
  font-size: 12px;
  line-height: 14px;
}
.prices {
  display: flex;
  flex: 1;
}
.prices button {
  flex: 1;
  color: #3a3a3a;
  font-size: 27px;
  line-height: 28px;
}
.prices button + button {
  border-left: 1px solid #737477;
}
.prices small {
  font-size: 20px;
}
.limits {
  height: 18px;
  padding: 0 5px;
  line-height: 18px;
}
.qty {
  display: flex;
  align-self: end;
  width: 83px;
  height: 17px;
  border: 1px solid #c8c8c8;
  background: #fff;
}
.qty input {
  flex: 1;
  min-width: 0;
  padding: 0;
  border: 0;
  border-right: 1px solid #c8c8c8;
  background: #ecedec;
  color: #888;
  font: 12px "Liberation Sans", Arial, sans-serif;
  text-align: center;
}
.qty button {
  display: flex;
  align-items: center;
  justify-content: center;
  width: 15px;
  color: #999;
}
.qty svg {
  width: 8px;
  height: 5px;
}
.t-dax .qty {
  width: 93px;
}
.big .sides {
  height: 29px;
  padding: 0 9px;
  font-size: 18px;
  line-height: 27px;
}
.big .spread {
  height: 29px;
  padding: 0 8px;
  font-size: 19px;
  line-height: 28px;
}
.big .prices button {
  font-size: 43px;
  line-height: 48px;
}
.big .prices small {
  font-size: 32px;
}
.big .limits {
  height: 28px;
  padding: 0 9px;
  font-size: 17px;
  line-height: 25px;
}
.big .qty {
  width: 135px;
  height: 20px;
}

/* chart */
.chart {
  background: #fff;
}
.num {
  width: 17px;
  height: 17px;
  margin-right: 6px;
  border: 1px solid #666;
  border-radius: 50%;
  color: #444;
  line-height: 15px;
  text-align: center;
}
.chart .tab {
  padding: 0 8px 0 9px;
}
.chart .tab .glass {
  margin-left: 4px;
}
.deal {
  position: relative;
  display: flex;
  align-self: stretch;
  margin-right: 3px;
}
.deal button {
  width: 68px;
  padding-bottom: 10px;
  color: #4e3510;
}
.deal .deal-sell {
  background: #c08323;
}
.deal .deal-buy {
  background: #27aabf;
  color: #0c4450;
}
.deal-spread {
  position: absolute;
  bottom: 0;
  left: 50%;
  width: 22px;
  height: 11px;
  margin-left: -11px;
  border-radius: 2px;
  background: #6a6a6a;
  color: #fff;
  font-size: 11px;
  line-height: 11px;
  text-align: center;
}
.tools {
  display: flex;
  flex: none;
  height: 21px;
  border-bottom: 1px solid #c4c4c4;
  background: #fff;
}
.tools button {
  display: flex;
  align-items: center;
  padding-bottom: 1px;
  border-right: 1px solid #d4d4d4;
}
.tools .t-icon {
  justify-content: center;
  width: 33px;
}
.tools .t-gear {
  width: 35px;
  margin-left: auto;
  border-right: 0;
  border-left: 1px solid #d4d4d4;
}
.t-range {
  width: 84px;
  padding-left: 6px;
}
.tools .t-key {
  justify-content: center;
  width: 23px;
  color: #0a78ff;
  font-size: 10px;
  font-weight: bold;
}
.t-hours {
  width: 90px;
  padding-left: 6px;
}
.t-text {
  gap: 6px;
  padding: 0 10px 0 11px;
}
.plot {
  flex: 1;
  min-height: 0;
  font-size: 12px;
}
.plot text {
  fill: #333;
}
.plot .up {
  fill: #008000;
}
.plot .down {
  fill: #f00;
}
.plot .cursor-time {
  fill: #fff;
  font-weight: bold;
  text-anchor: middle;
}
.plot .tag {
  fill: #fff;
  font-weight: bold;
}
.plot .ohlc,
.plot .current {
  font-size: 13px;
}
.plot tspan {
  fill: #00a800;
}
.levels {
  stroke-width: 2;
  stroke-dasharray: 2 2;
}
.drawbar {
  display: flex;
  flex: none;
  height: 22px;
  padding-left: 1px;
  border-top: 1px solid #adadad;
  background: #dcddde;
  font-size: 11px;
}
.drawbar > * {
  border-right: 1px solid #b8b8b8;
}
.drawbar > :last-child {
  border-right: 0;
}
.d-icon {
  display: flex;
  align-items: center;
  justify-content: center;
  width: 30px;
}
.d-icon.on {
  background: #eceef0;
}
.drawbar svg {
  width: 14px;
  height: 14px;
}
.d-gap {
  width: 65px;
}
.d-fav {
  display: flex;
  align-items: center;
  justify-content: space-between;
  width: 100px;
  padding: 0 8px 0 9px;
}
.d-period,
.d-draw {
  width: 100px;
}
.d-rest {
  flex: 1;
}
```
FILE: script.js
```js
// x, high, body top, body bottom, low, up
const candles = [
  [3, 358, 420, 423, 474, 1], [9, 363, 402, 418, 479, 1], [16, 295, 312, 404, 474, 1],
  [22, 310, 315, 418, 434, 0], [28, 355, 389, 415, 477, 1], [34, 350, 386, 394, 449, 0],
  [40, 384, 386, 418, 465, 0], [47, 179, 402, 410, 418, 1], [53, 335, 355, 394, 454, 1],
  [59, 248, 273, 352, 358, 1], [65, 216, 281, 307, 331, 0], [71, 240, 302, 392, 392, 0],
  [78, 314, 352, 394, 401, 1], [84, 327, 355, 371, 397, 0], [90, 279, 294, 365, 388, 1],
  [96, 242, 247, 302, 335, 1], [102, 232, 244, 302, 334, 0], [109, 240, 294, 344, 352, 0],
  [115, 337, 344, 350, 380, 1], [121, 250, 342, 347, 368, 0], [127, 328, 328, 350, 403, 1],
  [133, 313, 313, 326, 417, 1], [140, 258, 302, 315, 337, 1], [146, 271, 299, 339, 352, 0],
  [152, 299, 299, 342, 372, 1], [158, 237, 291, 297, 307, 0], [165, 287, 302, 342, 384, 0],
  [171, 332, 339, 368, 379, 0], [177, 345, 373, 392, 410, 0], [183, 369, 394, 458, 466, 0],
  [189, 451, 455, 487, 505, 0], [196, 434, 434, 490, 490, 1], [202, 414, 431, 455, 490, 0],
  [208, 456, 458, 487, 519, 0], [214, 480, 484, 495, 537, 0], [220, 431, 431, 497, 578, 1],
  [227, 290, 297, 434, 434, 1], [233, 256, 278, 323, 363, 0], [239, 290, 315, 331, 365, 0],
  [245, 282, 305, 328, 351, 1], [251, 220, 220, 307, 340, 1], [258, 126, 128, 223, 261, 1],
  [264, 73, 130, 136, 146, 0], [270, 144, 145, 265, 321, 0], [276, 271, 276, 323, 339, 0],
  [282, 253, 255, 326, 326, 1], [289, 255, 255, 360, 384, 0], [295, 261, 302, 371, 371, 1],
  [301, 277, 297, 331, 413, 0], [307, 277, 299, 318, 322, 1], [313, 295, 297, 326, 347, 0],
  [320, 323, 323, 352, 376, 0], [326, 345, 350, 355, 365, 0], [332, 352, 352, 363, 384, 0],
  [338, 356, 363, 365, 369, 1], [345, 356, 360, 365, 368, 0], [351, 360, 360, 381, 381, 0],
  [357, 363, 363, 384, 384, 1], [363, 356, 360, 394, 405, 0], [369, 402, 402, 416, 439, 0],
  [376, 364, 413, 418, 450, 0]
];

const group = document.getElementById('candles');

function bar(x, y, width, height, fill) {
  const rect = document.createElementNS('http://www.w3.org/2000/svg', 'rect');
  rect.setAttribute('x', x);
  rect.setAttribute('y', y);
  rect.setAttribute('width', width);
  rect.setAttribute('height', height);
  rect.setAttribute('fill', fill);
  group.appendChild(rect);
}

candles.forEach(([x, high, top, bottom, low, up]) => {
  const fill = up ? '#00b200' : '#ff0000';
  bar(x, high, 1, low - high, fill);
  bar(x - 1, top, 3, bottom - top, fill);
});
```
